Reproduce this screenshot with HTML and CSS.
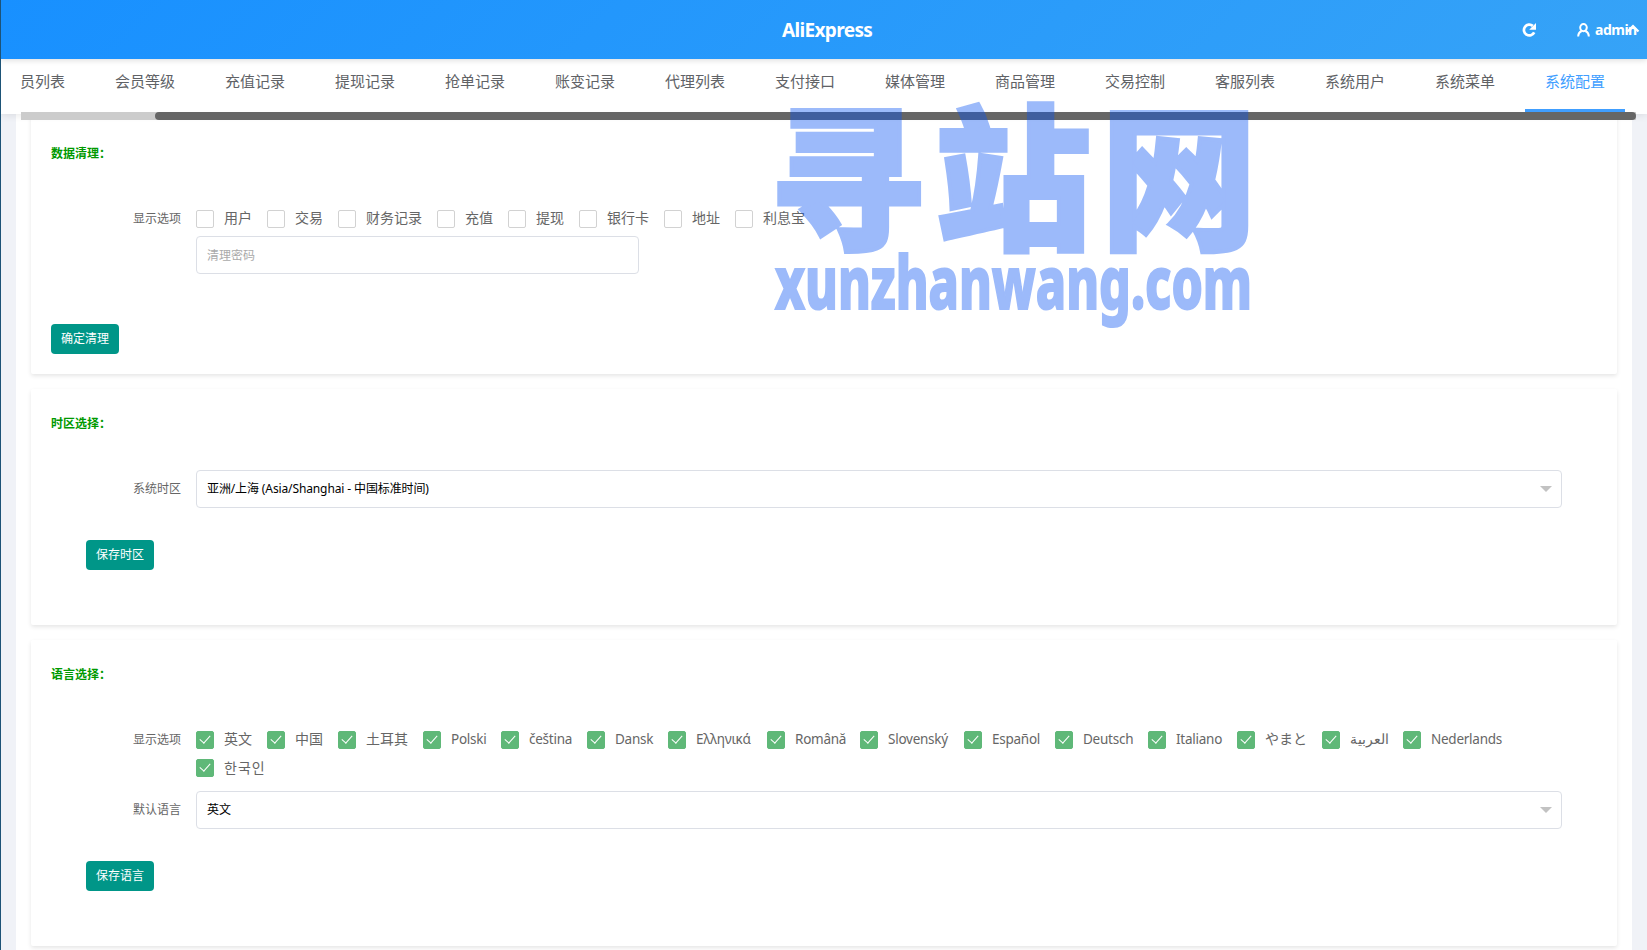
FILE: index.html
```html
<!DOCTYPE html>
<html lang="zh-CN">
<head>
    <meta charset="utf-8">
    <title>AliExpress</title>
    <link rel="stylesheet" href="styles.css">
</head>
<body>
    <header class="header">
        <h1 class="header-title">AliExpress</h1>
        <div class="header-tools">
            <svg class="icon-refresh" width="14" height="14" viewBox="0 0 14 14"><path d="M12.2 9.4A5.4 5.4 0 1 1 10.8 2.9" fill="none" stroke="#fff" stroke-width="2.7"/><path d="M14 0v6.8H7.2z" fill="#fff"/></svg>
            <div class="user">
                <svg width="13" height="14" viewBox="0 0 13 14" fill="none" stroke="#fff" stroke-width="2"><ellipse cx="6.5" cy="4.6" rx="3.3" ry="3.6"/><path d="M1.2 13.6c0-3 1.3-4.6 3.5-5.6M11.8 13.6c0-3-1.3-4.6-3.5-5.6"/></svg>
                <span class="user-name">admin</span>
                <svg class="user-arrow" width="14" height="9" viewBox="0 0 14 9"><path d="M1.5 7.5 7 2l5.5 5.5" fill="none" stroke="#fff" stroke-width="2.2"/></svg>
            </div>
        </div>
    </header>

    <nav class="nav">
        <div class="nav-scroll">
            <ul class="nav-list">
                <li>会员列表</li>
                <li>会员等级</li>
                <li>充值记录</li>
                <li>提现记录</li>
                <li>抢单记录</li>
                <li>账变记录</li>
                <li>代理列表</li>
                <li>支付接口</li>
                <li>媒体管理</li>
                <li>商品管理</li>
                <li>交易控制</li>
                <li>客服列表</li>
                <li>系统用户</li>
                <li>系统菜单</li>
                <li class="active">系统配置</li>
            </ul>
            <div class="scrollbar"><div class="scrollbar-thumb"></div></div>
        </div>
    </nav>

    <main class="main">
        <section class="card card-clean">
            <h2 class="card-title">数据清理：</h2>
            <div class="form-row">
                <label class="form-label">显示选项</label>
                <div class="form-block">
                    <div class="checks">
                        <span class="check"><i></i><span>用户</span></span>
                        <span class="check"><i></i><span>交易</span></span>
                        <span class="check"><i></i><span>财务记录</span></span>
                        <span class="check"><i></i><span>充值</span></span>
                        <span class="check"><i></i><span>提现</span></span>
                        <span class="check"><i></i><span>银行卡</span></span>
                        <span class="check"><i></i><span>地址</span></span>
                        <span class="check"><i></i><span>利息宝</span></span>
                    </div>
                    <input class="input" type="text" placeholder="清理密码">
                </div>
            </div>
            <button class="btn">确定清理</button>
        </section>

        <section class="card card-zone">
            <h2 class="card-title">时区选择：</h2>
            <div class="form-row">
                <label class="form-label">系统时区</label>
                <div class="form-block">
                    <div class="select">亚洲/上海 (Asia/Shanghai - 中国标准时间)</div>
                </div>
            </div>
            <button class="btn btn-indent">保存时区</button>
        </section>

        <section class="card card-lang">
            <h2 class="card-title">语言选择：</h2>
            <div class="form-row">
                <label class="form-label">显示选项</label>
                <div class="form-block">
                    <div class="checks">
                        <span class="check on"><i></i><span>英文</span></span>
                        <span class="check on"><i></i><span>中国</span></span>
                        <span class="check on"><i></i><span>土耳其</span></span>
                        <span class="check on pl"><i></i><span>Polski</span></span>
                        <span class="check on cs"><i></i><span>čeština</span></span>
                        <span class="check on da"><i></i><span>Dansk</span></span>
                        <span class="check on el"><i></i><span>Ελληνικά</span></span>
                        <span class="check on ro"><i></i><span>Română</span></span>
                        <span class="check on sk"><i></i><span>Slovenský</span></span>
                        <span class="check on es"><i></i><span>Español</span></span>
                        <span class="check on de"><i></i><span>Deutsch</span></span>
                        <span class="check on it"><i></i><span>Italiano</span></span>
                        <span class="check on ja"><i></i><span>やまと</span></span>
                        <span class="check on ar"><i></i><span>العربية</span></span>
                        <span class="check on nl"><i></i><span>Nederlands</span></span>
                        <span class="check on ko"><i></i><span>한국인</span></span>
                    </div>
                </div>
            </div>
            <div class="form-row">
                <label class="form-label">默认语言</label>
                <div class="form-block">
                    <div class="select">英文</div>
                </div>
            </div>
            <button class="btn btn-indent">保存语言</button>
        </section>
    </main>

    <svg class="watermark" width="500" height="240" viewBox="0 0 500 240">
        <g opacity="0.4" fill="#0a54f3" stroke="#0a54f3">
            <text class="wm-cn" x="1 167 333" y="142">寻站网</text>
            <text class="wm-en" x="7" y="214" textLength="477" lengthAdjust="spacingAndGlyphs">xunzhanwang.com</text>
        </g>
    </svg>
</body>
</html>
```
FILE: styles.css
```css
* { box-sizing: border-box; margin: 0; padding: 0; }
body { height: 950px; overflow: hidden; position: relative; border-left: 1px solid #1d5377; background: #f0f2f7; color: #666; font-family: "Noto Sans", "Noto Sans CJK SC", sans-serif; font-size: 14px; }

/* header */
.header { position: relative; z-index: 3; display: flex; align-items: center; height: 59px; padding-left: 781px; background: linear-gradient(135deg, #1890ff, #36a3f7); color: #fff; box-shadow: 0 1px 6px rgba(0, 0, 0, .15); }
.header-title { padding-top: 1px; font-size: 19px; line-height: 58px; font-weight: 700; letter-spacing: -.65px; }
.header-tools { display: flex; align-items: center; margin-left: auto; padding-right: 7px; }
.header-tools svg { display: block; }
.user { position: relative; display: flex; align-items: center; gap: 5px; width: 63px; margin-left: 41px; }
.user-name { font-size: 14px; line-height: 20px; font-weight: 700; letter-spacing: -.5px; }
.header-tools .user-arrow { position: absolute; right: 0; top: 4px; }

/* nav */
.nav { position: relative; z-index: 2; height: 55px; padding: 0 11px 0 20px; background: #fff; box-shadow: 0 1px 8px rgba(0, 0, 0, .1); }
.nav-scroll { height: 61px; overflow: hidden; }
.nav-list { display: flex; gap: 10px; height: 53px; margin-left: -36px; list-style: none; }
.nav-list li { flex: none; width: 100px; height: 53px; line-height: 44px; font-size: 15px; text-align: center; color: #606266; }
.nav-list .active { color: #409eff; border-bottom: 3px solid #409eff; }
.scrollbar { height: 8px; background: #ccc; }
.scrollbar-thumb { height: 8px; margin-left: 134px; border-radius: 4px; background: #666; }

/* cards */
.main { display: flex; flex-direction: column; gap: 15px; height: 860px; margin: -5px 15px 0; padding: 0 15px; background: #fff; }
.card { flex: none; padding: 0 20px; border-radius: 2px; box-shadow: 0 2px 4px rgba(0, 0, 0, .1); }
.card-clean { height: 265px; padding-top: 35px; }
.card-zone { height: 236px; padding-top: 25px; }
.card-lang { height: 306px; padding-top: 25px; }
.card-title { height: 20px; line-height: 20px; font-size: 12px; font-weight: 700; color: #090; }
.form-row { display: flex; }
.form-label { width: 130px; line-height: 38px; font-size: 12px; text-align: right; }
.form-block { flex: 1; margin-left: 15px; padding-right: 35px; }
.card-clean .form-row { margin-top: 36px; }
.card-zone .form-row { margin-top: 36px; }
.card-lang .card-title + .form-row { height: 70px; margin-top: 36px; }

.checks { display: flex; flex-wrap: wrap; column-gap: 15px; padding-top: 5px; margin-right: -20px; }
.check { display: flex; align-items: center; gap: 10px; height: 28px; white-space: nowrap; }
.check span { padding-bottom: 2px; line-height: 20px; }
.check i { position: relative; flex: none; width: 18px; height: 18px; border: 1px solid #d2d2d2; border-radius: 2px; }
.on i { border-color: #5fb878; background: #5fb878; }
.on i::after { content: ""; position: absolute; left: 5px; top: 1px; width: 5px; height: 9px; border: solid #fff; border-width: 0 1.3px 1.3px 0; transform: rotate(42deg); }
.pl span { width: 35px; }
.cs span { width: 43px; }
.da span { width: 38px; }
.el span { width: 56px; }
.ro span { width: 50px; }
.sk span { width: 61px; }
.es span { width: 48px; }
.de span { width: 50px; }
.it span { width: 46px; }
.ja span { width: 42px; }
.ar span { width: 38px; }
.nl span { width: 70px; }
.pl, .cs, .da, .el, .ro, .sk, .es, .de, .it, .nl { font-size: 13.5px; letter-spacing: -.25px; }
.ko { font-family: "Noto Sans CJK KR", sans-serif; letter-spacing: 1px; }

.input, .select { display: block; height: 38px; padding: 0 10px; border: 1px solid #dcdfe6; border-radius: 4px; background: #fff; font-family: inherit; font-size: 12px; line-height: 36px; }
.input { width: 443px; margin-top: 3px; }
.input::placeholder { color: #aaa; opacity: 1; }
.select { position: relative; color: #000; letter-spacing: -.12px; }
.select::after { content: ""; position: absolute; right: 9px; top: 15px; border: 6px solid transparent; border-top-color: #c2c2c2; border-bottom: 0; }

.btn { display: block; width: 68px; height: 30px; margin-top: 50px; border: 0; border-radius: 4px; background: #009688; color: #fff; font-family: inherit; font-size: 12px; line-height: 30px; text-align: center; }
.btn-indent { margin: 32px 0 0 35px; }

/* watermark over the page */
.watermark { position: absolute; z-index: 10; left: 767px; top: 95px; pointer-events: none; }
.wm-cn { font-family: "Noto Sans CJK SC", sans-serif; font-size: 156px; font-weight: 900; stroke-width: 4px; }
.wm-en { font-family: "Noto Sans", sans-serif; font-size: 73px; font-weight: 800; stroke-width: 2px; }
```
